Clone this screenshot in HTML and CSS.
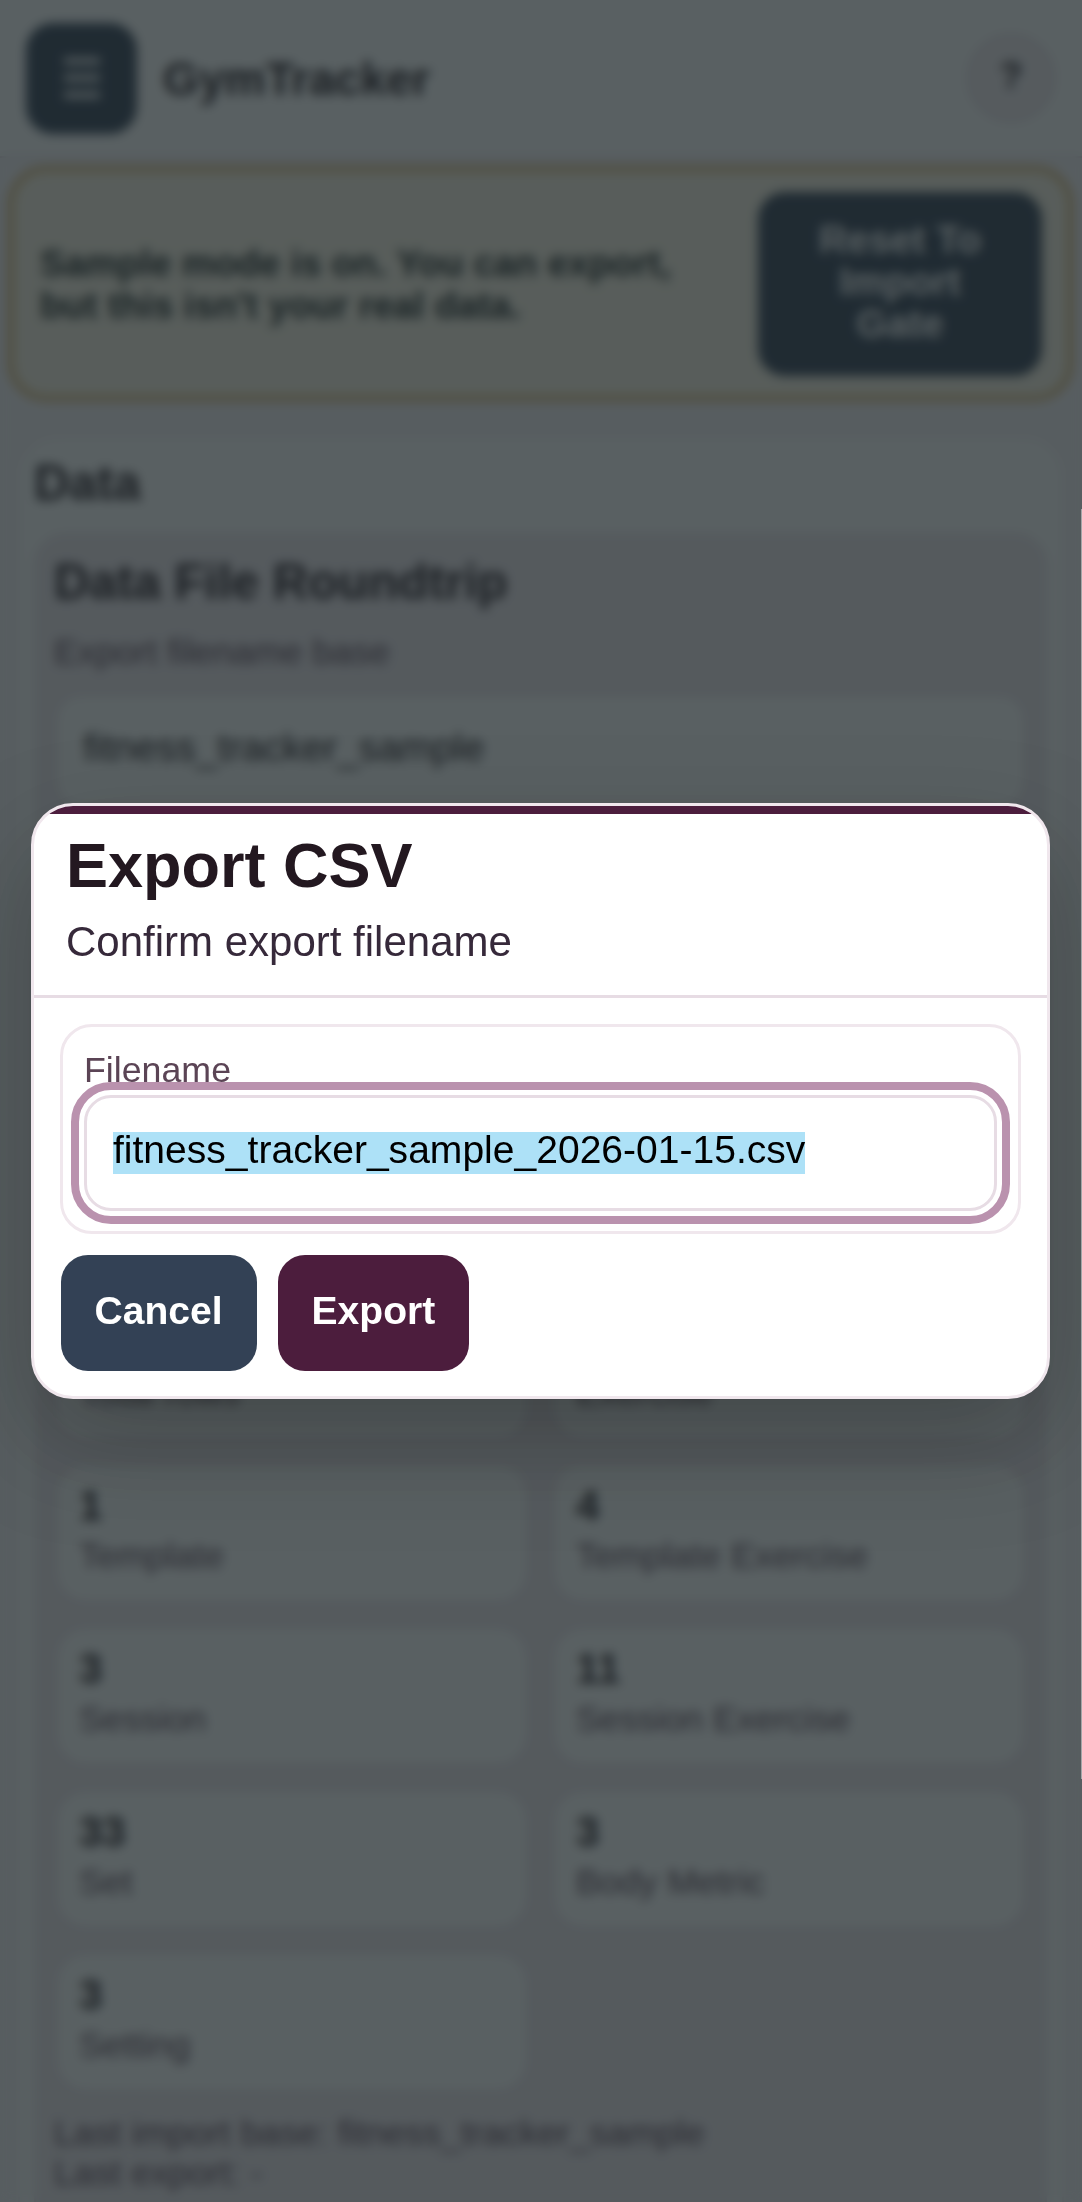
FILE: index.html
```html
<!DOCTYPE html>
<html lang="en">
<head>
<meta charset="utf-8">
<title>GymTracker</title>
<link rel="stylesheet" href="styles.css">
</head>
<body>
<div class="app">
  <header class="topbar">
    <button class="btn menu-btn" aria-label="Menu">
      <svg width="36" height="42" viewBox="0 0 36 42"><path d="M0 4h36M0 21h36M0 38h36" stroke="currentColor" stroke-width="6"/></svg>
    </button>
    <span class="brand">GymTracker</span>
    <span class="help">?</span>
  </header>
  <section class="banner">
    <p class="banner-text">Sample mode is on. You can export, but this isn't your real data.</p>
    <button class="btn reset-btn">Reset To Import Gate</button>
  </section>
  <main class="card">
    <h2 class="heading">Data</h2>
    <section class="panel">
      <h3 class="heading">Data File Roundtrip</h3>
      <div class="label">Export filename base</div>
      <div class="field"><span class="value">fitness_tracker_sample</span></div>
      <div class="stats">
        <div class="stat"><b class="num">33</b><span class="label">Total rows</span></div>
        <div class="stat"><b class="num">4</b><span class="label">Exercise</span></div>
        <div class="stat"><b class="num">1</b><span class="label">Template</span></div>
        <div class="stat"><b class="num">4</b><span class="label">Template Exercise</span></div>
        <div class="stat"><b class="num">3</b><span class="label">Session</span></div>
        <div class="stat"><b class="num">11</b><span class="label">Session Exercise</span></div>
        <div class="stat"><b class="num">33</b><span class="label">Set</span></div>
        <div class="stat"><b class="num">3</b><span class="label">Body Metric</span></div>
        <div class="stat"><b class="num">3</b><span class="label">Setting</span></div>
      </div>
      <div class="label history">Last import base: fitness_tracker_sample<br>Last export: -</div>
    </section>
  </main>
</div>
<div class="backdrop">
  <div class="modal" role="dialog">
    <div class="modal-head">
      <h1 class="modal-title">Export CSV</h1>
      <p class="modal-sub">Confirm export filename</p>
    </div>
    <div class="modal-body">
      <div class="group">
        <div class="label">Filename</div>
        <div class="field focused"><span class="value selected">fitness_tracker_sample_2026-01-15.csv</span></div>
      </div>
      <div class="actions">
        <button class="btn">Cancel</button>
        <button class="btn primary">Export</button>
      </div>
    </div>
  </div>
</div>
</body>
</html>
```
FILE: styles.css
```css
* { box-sizing: border-box; margin: 0; }
body {
  height: 2202px;
  overflow: hidden;
  background: #f8f5f8;
  color: #231820;
  font-family: "Liberation Sans", Arial, sans-serif;
}
.app { height: 2202px; overflow: hidden; }
.btn {
  height: 116px;
  padding: 0 34px 5px;
  border: 0;
  border-radius: 27px;
  background: #334155;
  color: #fff;
  font: bold 39.05px/42px "Liberation Sans", Arial, sans-serif;
}
.primary { background: #4c1d3d; }

.topbar {
  display: flex;
  align-items: center;
  height: 158px;
  padding: 0 27px 0 26px;
  background: #fff;
  border-bottom: 2px solid #e5d9e1;
}
.menu-btn { width: 111px; height: 111px; padding: 0; }
.menu-btn svg { display: block; margin: auto; }
.brand { margin-left: 26px; padding-top: 2px; font-size: 46.2px; font-weight: bold; }
.help {
  width: 88px;
  height: 88px;
  margin-left: auto;
  border: 3px solid #e5d9e1;
  border-radius: 50%;
  background: #f3edf1;
  font: bold 37px/77px "Liberation Sans", Arial, sans-serif;
  text-align: center;
}

.banner {
  display: flex;
  align-items: center;
  justify-content: space-between;
  height: 235px;
  margin: 8px 9px 0 8px;
  padding: 0 26px 0 27px;
  border: 5px solid #d9ae60;
  border-radius: 38px;
  background: #faf4e4;
}
.banner-text { width: 660px; padding-top: 3px; color: #1c2626; font-size: 36.95px; font-weight: bold; line-height: 42px; }
.reset-btn { width: 284px; height: 184px; padding: 0 50px 4px; }

.card {
  margin: 35px 18px 0;
  padding: 16px 15px 0 14px;
  height: 1900px;
  border: 2px solid #f0e8ee;
  border-radius: 40px;
  background: #fff;
}
.heading { font-size: 49.2px; line-height: 58px; }
.panel {
  height: 1800px;
  margin-top: 21px;
  padding: 18px 18px 0 18px;
  border: 2px solid #e9e0e6;
  border-radius: 32px;
  background: #f0e9ee;
}
.label { color: #5b4455; font-size: 35.75px; line-height: 41px; }
.panel > .label { margin-top: 21px; }
.field {
  display: flex;
  align-items: center;
  height: 116px;
  padding: 0 26px;
  border: 3px solid #e7dce4;
  border-radius: 27px;
  background: #fff;
}
.value { padding-bottom: 7px; font-size: 39.05px; line-height: 35px; }
.panel > .field { margin-top: 20px; }
.stats {
  display: grid;
  grid-template-columns: 1fr 1fr;
  grid-auto-rows: 142px;
  gap: 21px;
  margin-top: 490px;
}
.stat {
  display: flex;
  flex-direction: column;
  padding: 16px 22px;
  border: 3px solid #e7dce4;
  border-radius: 32px;
  background: #fff;
}
.num { margin-bottom: 5px; font-size: 42px; line-height: 50px; }
.panel > .history { margin-top: 20px; font-size: 35.7px; line-height: 40px; }

.backdrop {
  position: fixed;
  inset: 0;
  display: flex;
  align-items: center;
  justify-content: center;
  padding-right: 1px;
  background: rgba(25, 34, 38, .72);
  backdrop-filter: blur(5.25px);
}
.backdrop::after {
  content: "";
  position: absolute;
  top: 509px;
  right: 0;
  width: 1px;
  height: 1270px;
  background: #a3a6a8;
}
.modal {
  width: 1019px;
  height: 596px;
  overflow: hidden;
  border: 3px solid #f0e7ed;
  border-radius: 42px;
  background: #fff;
  box-shadow: 0 42px 105px rgba(0, 0, 0, .26);
}
.modal-head {
  height: 192px;
  padding: 15px 32px 0;
  border-top: 8px solid #4c1d3d;
  border-bottom: 3px solid #e7dce4;
}
.modal-title { font-size: 63px; line-height: 72px; }
.modal-sub { margin-top: 17px; color: #36293a; font-size: 42px; line-height: 48px; }
.modal-body { padding: 26px; }
.group {
  height: 210px;
  padding: 23px 21px 0;
  border: 3px solid #f0e7ed;
  border-radius: 32px;
}
.focused { margin-top: 4px; outline: 8px solid #ba92ae; outline-offset: 5px; }
.selected { background: #ade1f7; color: #000; }
.actions { display: flex; gap: 21px; margin: 21px 0 0 .5px; }
```
